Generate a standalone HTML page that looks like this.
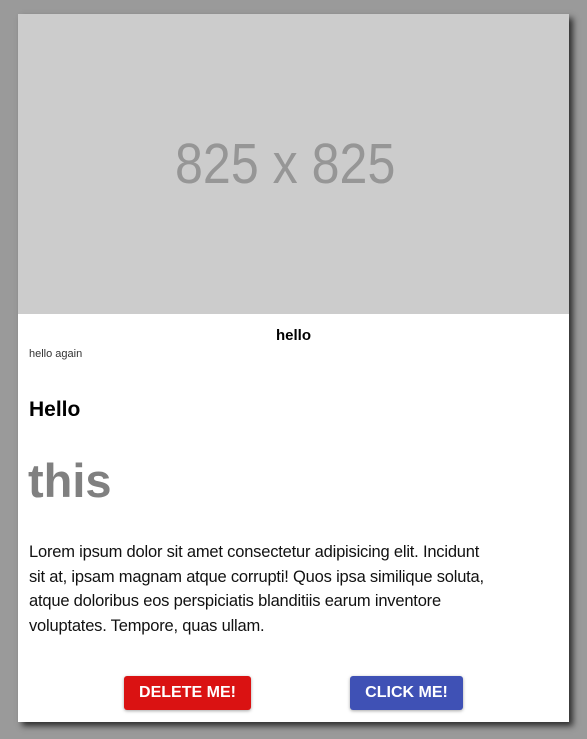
<!DOCTYPE html>
<html><head><style>
body{margin:0;width:587px;height:739px;background:#9a9a9a;position:relative;font-family:"Liberation Sans",sans-serif;overflow:hidden}
.card{position:absolute;left:18px;top:14px;width:551px;height:708px;background:#fff;box-shadow:4px 4px 6px rgba(0,0,0,.7)}
.img{height:300px;background:#cccccc;display:flex;align-items:center;justify-content:center;color:#969696;font-size:57px}
.img span{display:inline-block;transform:translateX(-8px) scaleX(.88)}
.t{position:absolute;top:313px;left:0;width:551px;text-align:center;font-weight:bold;font-size:15px}
.s{position:absolute;top:334px;left:11px;font-size:11px;color:#333}
.h{position:absolute;top:384px;left:11px;font-size:21px;font-weight:bold}
.this{position:absolute;top:439px;left:10px;font-size:47px;font-weight:bold;color:#808080}
.p{position:absolute;top:526px;left:11px;width:520px;font-size:16.5px;line-height:24.5px;color:#111;letter-spacing:-0.2px}
.b{position:absolute;top:662px;height:34px;border-radius:3px;color:#fff;font-weight:bold;font-size:16px;display:flex;align-items:center;justify-content:center;box-shadow:0 1px 3px rgba(0,0,0,.35)}
</style></head><body>
<div class="card">
<div class="img"><span>825 x 825</span></div>
<div class="t">hello</div>
<div class="s">hello again</div>
<div class="h">Hello</div>
<div class="this">this</div>
<div class="p">Lorem ipsum dolor sit amet consectetur adipisicing elit. Incidunt<br>sit at, ipsam magnam atque corrupti! Quos ipsa similique soluta,<br>atque doloribus eos perspiciatis blanditiis earum inventore<br>voluptates. Tempore, quas ullam.</div>
<div class="b" style="left:106px;width:127px;background:#da1212">DELETE ME!</div>
<div class="b" style="left:332px;width:113px;background:#3f51b5">CLICK ME!</div>
</div>
</body></html>
